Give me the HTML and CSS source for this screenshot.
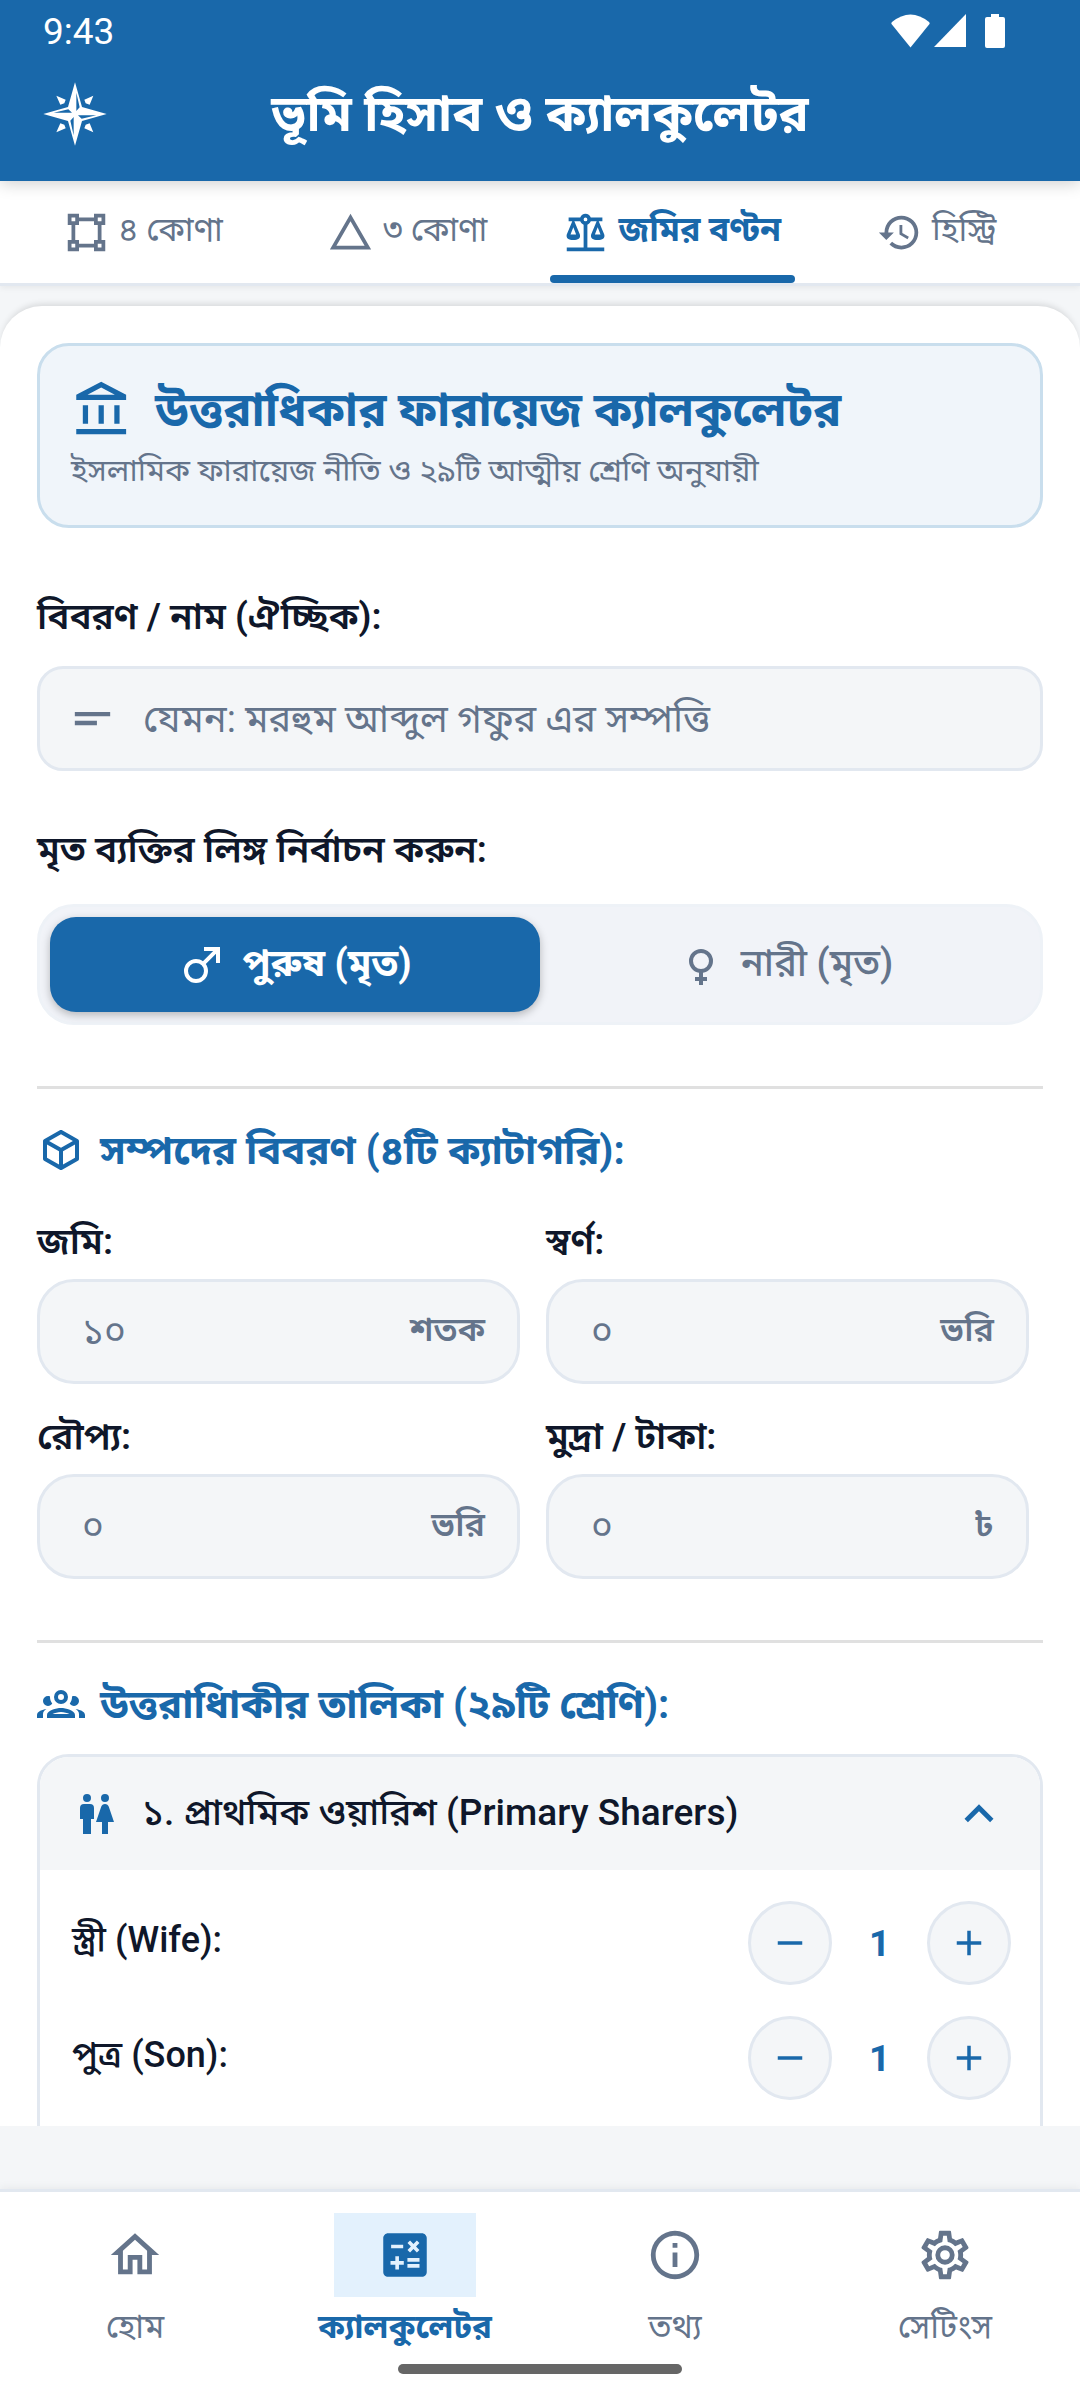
FILE: index.html
```html
<!DOCTYPE html>
<html lang="bn">
<head>
<meta charset="utf-8">
<meta name="viewport" content="width=device-width, initial-scale=1">
<title>ভূমি হিসাব ও ক্যালকুলেটর</title>
<link rel="stylesheet" href="styles.css">
</head>
<body>
<div class="app">
  <header class="app-header">
    <div class="status">
      <span class="clock">9:43</span>
      <span class="status-icons">
        <svg class="st-wifi" viewBox="0 0 39 34"><path d="M19.500 33.500 0.500 10Q0 9 1 8Q19.500 -7 38 8Q39 9 38.500 10Z"/></svg>
        <svg class="st-cell" viewBox="0 0 32 34"><path d="M32 0V33H0Z"/></svg>
        <svg class="st-batt" viewBox="0 0 20 34"><path d="M6 0h8v3h4q2 0 2 2v27q0 2-2 2H2q-2 0-2-2V5q0-2 2-2h4z"/></svg>
      </span>
    </div>
    <div class="title-row">
      <svg class="logo" viewBox="-96 -96 192 192" aria-hidden="true">
        <path d="M0 -95 21 -21 95 0 21 21 0 95 -21 21 -95 0 -21 -21ZM4 -64V-9L14 -20ZM64 4H9L20 14ZM-4 64V9L-14 20ZM-64 -4H-9L-20 -14Z"/>
        <path d="M-56 -55 -28 -43 -32 -32 -44 -28ZM55 -55 28 -43 32 -32 44 -28ZM-56 55 -28 43 -32 32 -44 28ZM55 55 28 43 32 32 44 28Z"/>
      </svg>
      <h1 class="app-title">ভূমি হিসাব ও ক্যালকুলেটর</h1>
    </div>
  </header>

  <nav class="tabs">
    <button class="tab" type="button">
      <svg class="i45" viewBox="0 0 24 24"><path d="M2,2H8V4H16V2H22V8H20V16H22V22H16V20H8V22H2V16H4V8H2V2M16,8V6H8V8H6V16H8V18H16V16H18V8H16M4,4V6H6V4H4M18,4V6H20V4H18M4,18V20H6V18H4M18,18V20H20V18H18Z"/></svg>
      <span>৪ কোণা</span>
    </button>
    <button class="tab" type="button">
      <svg class="i45" viewBox="0 0 24 24"><path d="M12,2L1,21H23M12,6L19.530,19H4.470"/></svg>
      <span>৩ কোণা</span>
    </button>
    <button class="tab tab-on" type="button">
      <svg class="i45" viewBox="0 0 24 24"><path d="M12,2C10.730,2 9.600,2.800 9.180,4H3V6H4.950L2,13C1.530,15 3,16 5.500,16C8,16 9.560,15 9,13L6.050,6H9.170C9.500,6.850 10.150,7.500 11,7.830V20H2V22H22V20H13V7.820C13.850,7.500 14.500,6.850 14.820,6H17.950L15,13C14.530,15 16,16 18.500,16C21,16 22.560,15 22,13L19.050,6H21V4H14.830C14.400,2.800 13.270,2 12,2M12,4A1,1 0 0,1 13,5A1,1 0 0,1 12,6A1,1 0 0,1 11,5A1,1 0 0,1 12,4M5.500,9.250L7,13H4L5.500,9.250M18.500,9.250L20,13H17L18.500,9.250Z"/></svg>
      <span>জমির বণ্টন</span>
    </button>
    <button class="tab" type="button">
      <svg class="i45" viewBox="0 0 24 24"><path d="M13.500,8H12V13L16.280,15.540L17,14.330L13.500,12.250V8M13,3A9,9 0 0,0 4,12H1L4.960,16.030L9,12H6A7,7 0 0,1 13,5A7,7 0 0,1 20,12A7,7 0 0,1 13,19C11.070,19 9.320,18.210 8.060,16.940L6.640,18.360C8.270,20 10.500,21 13,21A9,9 0 0,0 22,12A9,9 0 0,0 13,3"/></svg>
      <span>হিস্ট্রি</span>
    </button>
  </nav>

  <main class="sheet">
    <section class="hero">
      <h2 class="hero-title">
        <svg class="i63" viewBox="0 0 24 24"><path d="M6.500,10H4.500V17H6.500V10M12.500,10H10.500V17H12.500V10M21,19H2V21H21V19M18.500,10H16.500V17H18.500V10M11.500,3.260L16.710,6H6.290L11.500,3.260M11.500,1L2,6V8H21V6L11.500,1Z"/></svg>
        <span class="drop">উত্তরাধিকার ফারায়েজ ক্যালকুলেটর</span>
      </h2>
      <p class="hero-sub">ইসলামিক ফারায়েজ নীতি ও ২৯টি আত্মীয় শ্রেণি অনুযায়ী</p>
    </section>

    <label class="label label-desc" for="desc">বিবরণ / নাম (ঐচ্ছিক):</label>
    <div class="field field-wide">
      <svg class="i53" viewBox="0 0 24 24"><path d="M4,9H20V11H4V9M4,13H14V15H4V13Z"/></svg>
      <input class="input" id="desc" type="text" placeholder="যেমন: মরহুম আব্দুল গফুর এর সম্পত্তি">
    </div>

    <p class="label label-gender">মৃত ব্যক্তির লিঙ্গ নির্বাচন করুন:</p>
    <div class="segment">
      <button class="seg seg-on" type="button">
        <svg class="i48" viewBox="0 0 24 24"><path d="M9,9C10.290,9 11.500,9.410 12.470,10.110L17.580,5H13V3H21V11H19V6.410L13.890,11.500C14.590,12.500 15,13.700 15,15A6,6 0 0,1 9,21A6,6 0 0,1 3,15A6,6 0 0,1 9,9M9,11A4,4 0 0,0 5,15A4,4 0 0,0 9,19A4,4 0 0,0 13,15A4,4 0 0,0 9,11Z"/></svg>
        <span>পুরুষ (মৃত)</span>
      </button>
      <button class="seg" type="button">
        <svg class="i48" viewBox="0 0 24 24"><path d="M12,4A6,6 0 0,1 18,10C18,12.970 15.840,15.440 13,15.920V18H15V20H13V22H11V20H9V18H11V15.920C8.160,15.440 6,12.970 6,10A6,6 0 0,1 12,4M12,6A4,4 0 0,0 8,10A4,4 0 0,0 12,14A4,4 0 0,0 16,10A4,4 0 0,0 12,6Z"/></svg>
        <span>নারী (মৃত)</span>
      </button>
    </div>

    <section class="block">
      <h3 class="block-title">
        <svg class="i48" viewBox="0 0 24 24"><path d="M21,16.500C21,16.880 20.790,17.210 20.470,17.380L12.570,21.820C12.410,21.940 12.210,22 12,22C11.790,22 11.590,21.940 11.430,21.820L3.530,17.380C3.210,17.210 3,16.880 3,16.500V7.500C3,7.120 3.210,6.790 3.530,6.620L11.430,2.180C11.590,2.060 11.790,2 12,2C12.210,2 12.410,2.060 12.570,2.180L20.470,6.620C20.790,6.790 21,7.120 21,7.500V16.500M12,4.150L6.040,7.500L12,10.850L17.960,7.500L12,4.150M5,15.910L11,19.290V12.580L5,9.210V15.910M19,15.910V9.210L13,12.580V19.290L19,15.910Z"/></svg>
        <span class="drop">সম্পদের বিবরণ (৪টি ক্যাটাগরি):</span>
      </h3>
      <div class="assets">
        <div class="asset"><label class="label" for="land">জমি:</label><div class="field"><input class="input" id="land" type="text" placeholder="১০"><span class="unit">শতক</span></div></div>
        <div class="asset"><label class="label" for="gold">স্বর্ণ:</label><div class="field"><input class="input" id="gold" type="text" placeholder="০"><span class="unit">ভরি</span></div></div>
        <div class="asset"><label class="label" for="silver">রৌপ্য:</label><div class="field"><input class="input" id="silver" type="text" placeholder="০"><span class="unit">ভরি</span></div></div>
        <div class="asset"><label class="label" for="cash">মুদ্রা / টাকা:</label><div class="field"><input class="input" id="cash" type="text" placeholder="০"><span class="unit">৳</span></div></div>
      </div>
    </section>

    <section class="block">
      <h3 class="block-title">
        <svg class="i48" viewBox="0 0 24 24"><path d="M12,5A3.500,3.500 0 0,0 8.500,8.500A3.500,3.500 0 0,0 12,12A3.500,3.500 0 0,0 15.500,8.500A3.500,3.500 0 0,0 12,5M12,7A1.500,1.500 0 0,1 13.500,8.500A1.500,1.500 0 0,1 12,10A1.500,1.500 0 0,1 10.500,8.500A1.500,1.500 0 0,1 12,7M5.500,8A2.500,2.500 0 0,0 3,10.500C3,11.440 3.530,12.250 4.290,12.680C4.650,12.880 5.060,13 5.500,13C5.940,13 6.350,12.880 6.710,12.680C7.080,12.470 7.390,12.170 7.620,11.810C6.890,10.860 6.500,9.700 6.500,8.500C6.500,8.410 6.500,8.310 6.500,8.220C6.200,8.080 5.860,8 5.500,8M18.500,8C18.140,8 17.800,8.080 17.500,8.220C17.500,8.310 17.500,8.410 17.500,8.500C17.500,9.700 17.110,10.860 16.380,11.810C16.500,12 16.630,12.150 16.780,12.300C16.940,12.450 17.100,12.580 17.290,12.680C17.650,12.880 18.060,13 18.500,13C18.940,13 19.350,12.880 19.710,12.680C20.470,12.250 21,11.440 21,10.500A2.500,2.500 0 0,0 18.500,8M12,14C9.660,14 5,15.170 5,17.500V19H19V17.500C19,15.170 14.340,14 12,14M4.710,14.550C2.780,14.780 0,15.760 0,17.500V19H3V17.070C3,16.060 3.690,15.220 4.710,14.550M19.290,14.550C20.310,15.220 21,16.060 21,17.070V19H24V17.500C24,15.760 21.220,14.780 19.290,14.550M12,16C13.530,16 15.240,16.500 16.230,17H7.770C8.760,16.500 10.470,16 12,16Z"/></svg>
        <span class="drop">উত্তরাধিাকীর তালিকা (২৯টি শ্রেণি):</span>
      </h3>
      <div class="accordion">
        <button class="acc-head" type="button" aria-expanded="true">
          <svg class="i48" viewBox="0 0 24 24"><path d="M7.500,2A2,2 0 0,1 9.500,4A2,2 0 0,1 7.500,6A2,2 0 0,1 5.500,4A2,2 0 0,1 7.500,2M6,7H9A2,2 0 0,1 11,9V14.500H9.500V22H5.500V14.500H4V9A2,2 0 0,1 6,7M16.500,2A2,2 0 0,1 18.500,4A2,2 0 0,1 16.500,6A2,2 0 0,1 14.500,4A2,2 0 0,1 16.500,2M15,22V16H12L14.590,8.410C14.840,7.590 15.600,7 16.500,7C17.400,7 18.160,7.590 18.410,8.410L21,16H18V22H15Z"/></svg>
          <span class="acc-name">১. প্রাথমিক ওয়ারিশ (Primary Sharers)</span>
          <svg class="i58" viewBox="0 0 24 24"><path d="M7.410,15.410L12,10.830L16.590,15.410L18,14L12,8L6,14L7.410,15.410Z"/></svg>
        </button>
        <div class="heir">
          <span class="heir-name">স্ত্রী (Wife):</span>
          <button class="step" type="button" aria-label="কমান"><svg class="i42" viewBox="0 0 24 24"><path d="M19,13H5V11H19V13Z"/></svg></button>
          <output class="count">1</output>
          <button class="step" type="button" aria-label="বাড়ান"><svg class="i42" viewBox="0 0 24 24"><path d="M19,13H13V19H11V13H5V11H11V5H13V11H19V13Z"/></svg></button>
        </div>
        <div class="heir">
          <span class="heir-name">পুত্র (Son):</span>
          <button class="step" type="button" aria-label="কমান"><svg class="i42" viewBox="0 0 24 24"><path d="M19,13H5V11H19V13Z"/></svg></button>
          <output class="count">1</output>
          <button class="step" type="button" aria-label="বাড়ান"><svg class="i42" viewBox="0 0 24 24"><path d="M19,13H13V19H11V13H5V11H11V5H13V11H19V13Z"/></svg></button>
        </div>
      </div>
    </section>
  </main>

  <nav class="bottom">
    <a class="nav-item" href="#home">
      <span class="nav-icon"><svg class="i58" viewBox="0 0 24 24"><path d="M12 5.690L17 10.190V18H15V12H9V18H7V10.190L12 5.690M12 3L2 12H5V20H11V14H13V20H19V12H22"/></svg></span>
      <span>হোম</span>
    </a>
    <a class="nav-item nav-on" href="#calculator">
      <span class="nav-icon"><svg class="i58" viewBox="0 0 24 24"><path d="M19,3H5C3.900,3 3,3.900 3,5V19C3,20.100 3.900,21 5,21H19C20.100,21 21,20.100 21,19V5C21,3.900 20.100,3 19,3M13.030,7.060L14.090,6L15.500,7.410L16.910,6L17.970,7.060L16.560,8.470L17.970,9.880L16.910,10.940L15.500,9.540L14.090,10.950L13.030,9.890L14.440,8.480L13.030,7.060M6.250,7.720H11.250V9.220H6.250V7.720M11.500,16H9.500V18H8V16H6V14.500H8V12.500H9.500V14.500H11.500V16M18,17.250H13V15.750H18V17.250M18,14.750H13V13.250H18V14.750Z"/></svg></span>
      <span>ক্যালকুলেটর</span>
    </a>
    <a class="nav-item" href="#info">
      <span class="nav-icon"><svg class="i58" viewBox="0 0 24 24"><path d="M11,9H13V7H11M12,20C7.590,20 4,16.410 4,12C4,7.590 7.590,4 12,4C16.410,4 20,7.590 20,12C20,16.410 16.410,20 12,20M12,2A10,10 0 0,0 2,12A10,10 0 0,0 12,22A10,10 0 0,0 22,12A10,10 0 0,0 12,2M11,17H13V11H11V17Z"/></svg></span>
      <span>তথ্য</span>
    </a>
    <a class="nav-item" href="#settings">
      <span class="nav-icon"><svg class="i58" viewBox="0 0 24 24"><path d="M12,8A4,4 0 0,1 16,12A4,4 0 0,1 12,16A4,4 0 0,1 8,12A4,4 0 0,1 12,8M12,10A2,2 0 0,0 10,12A2,2 0 0,0 12,14A2,2 0 0,0 14,12A2,2 0 0,0 12,10M10,22C9.750,22 9.540,21.820 9.500,21.580L9.130,18.930C8.500,18.680 7.960,18.340 7.440,17.940L4.950,18.950C4.730,19.030 4.460,18.950 4.340,18.730L2.340,15.270C2.210,15.050 2.270,14.780 2.460,14.630L4.570,12.970L4.500,12L4.570,11L2.460,9.370C2.270,9.220 2.210,8.950 2.340,8.730L4.340,5.270C4.460,5.050 4.730,4.960 4.950,5.050L7.440,6.050C7.960,5.660 8.500,5.320 9.130,5.070L9.500,2.420C9.540,2.180 9.750,2 10,2H14C14.250,2 14.460,2.180 14.500,2.420L14.870,5.070C15.500,5.320 16.040,5.660 16.560,6.050L19.050,5.050C19.270,4.960 19.540,5.050 19.660,5.270L21.660,8.730C21.790,8.950 21.730,9.220 21.540,9.370L19.430,11L19.500,12L19.430,13L21.540,14.630C21.730,14.780 21.790,15.050 21.660,15.270L19.660,18.730C19.540,18.950 19.270,19.040 19.050,18.950L16.560,17.950C16.040,18.340 15.500,18.680 14.870,18.930L14.500,21.580C14.460,21.820 14.250,22 14,22H10M11.250,4L10.880,6.610C9.680,6.860 8.620,7.500 7.850,8.390L5.440,7.350L4.690,8.650L6.800,10.200C6.400,11.370 6.400,12.640 6.800,13.800L4.680,15.360L5.430,16.660L7.860,15.620C8.630,16.500 9.680,17.140 10.870,17.380L11.240,20H12.760L13.130,17.390C14.320,17.140 15.370,16.500 16.140,15.620L18.570,16.660L19.320,15.360L17.200,13.810C17.600,12.640 17.600,11.370 17.200,10.200L19.310,8.650L18.560,7.350L16.150,8.390C15.380,7.500 14.320,6.860 13.120,6.620L12.750,4H11.250Z"/></svg></span>
      <span>সেটিংস</span>
    </a>
    <span class="gesture"></span>
  </nav>
</div>
</body>
</html>
```
FILE: styles.css
```css
:root {
  --blue: #1968aa;
  --slate: #64748b;
  --ink: #0f172a;
  --line: #e2e8f0;
  --soft: #f4f6f8;
}

* { box-sizing: border-box; }

body {
  margin: 0;
  background: #f4f6f8;
  color: var(--ink);
  font-family: Roboto, "Noto Sans Bengali", "Noto Sans", sans-serif;
}

h1, h2, h3, p { margin: 0; }
svg { display: block; flex: none; fill: currentColor; fill-rule: evenodd; }
button, input { font: inherit; color: inherit; }
button { margin: 0; padding: 0; border: 0; background: none; cursor: pointer; }

.i42 { width: 42px; height: 42px; }
.i45 { width: 45px; height: 45px; }
.i48 { width: 48px; height: 48px; }
.i53 { width: 53px; height: 53px; }
.i58 { width: 58px; height: 58px; }
.i63 { width: 63px; height: 63px; }

.app { display: flex; flex-direction: column; height: 100vh; overflow: hidden; }

/* Header */
.app-header {
  position: relative;
  z-index: 1;
  flex: none;
  background: var(--blue);
  color: #fff;
  box-shadow: 0 2px 16px rgba(0, 0, 0, 0.2);
}
.status {
  display: flex;
  align-items: center;
  justify-content: space-between;
  height: 62px;
  padding: 0 75px 0 43px;
  font-size: 37px;
}
.status-icons { display: flex; align-items: center; }
.st-wifi { width: 39px; height: 34px; margin-right: 4px; }
.st-cell { width: 32px; height: 34px; margin-right: 19px; }
.st-batt { width: 20px; height: 34px; }
.title-row {
  display: grid;
  grid-template-columns: 64px 1fr 64px;
  align-items: center;
  height: 119px;
  padding: 0 43px 15px;
}
.logo { width: 64px; height: 64px; }
.app-title { font-size: 50px; line-height: 64px; font-weight: 700; text-align: center; }

/* Tabs */
.tabs {
  display: grid;
  grid-template-columns: repeat(4, 1fr);
  flex: none;
  height: 105px;
  padding: 0 11px;
  background: #fff;
  border-bottom: 3px solid var(--line);
  box-shadow: 0 2px 6px rgba(0, 0, 0, 0.06);
}
.tab {
  position: relative;
  display: flex;
  align-items: center;
  justify-content: center;
  gap: 10px;
  margin: 0 10px;
  color: var(--slate);
  font-size: 33px;
  white-space: nowrap;
}
.tab-on { color: var(--blue); font-weight: 700; font-size: 34px; }
.tab-on::after {
  content: "";
  position: absolute;
  inset: auto 0 0;
  height: 8px;
  border-radius: 4px;
  background: var(--blue);
}

/* Content sheet */
.sheet {
  flex: 1;
  min-height: 0;
  overflow: hidden;
  margin: 20px 0 63px;
  padding: 37px 37px 0;
  background: #fff;
  border-radius: 42px 42px 0 0;
  box-shadow: 0 -4px 6px -2px rgba(0, 0, 0, 0.12);
}
.drop { padding-top: 6px; }
.hero {
  height: 185px;
  padding: 32px 31px;
  background: #f0f5fa;
  border: 3px solid #c9deed;
  border-radius: 32px;
}
.hero-title {
  display: flex;
  align-items: center;
  gap: 21px;
  height: 64px;
  color: var(--blue);
  font-size: 47px;
}
.hero-sub { margin-top: 4px; color: var(--slate); font-size: 31px; line-height: 50px; }

.label { display: block; font-size: 37px; line-height: 50px; font-weight: 600; }
.label-desc { margin: 64px 0 24px; }
.label-gender { margin: 54px 0 29px; }

.field {
  display: flex;
  align-items: center;
  height: 105px;
  padding: 0 32px;
  background: var(--soft);
  border: 3px solid var(--line);
  border-radius: 37px;
  color: var(--slate);
}
.field-wide { border-radius: 26px; gap: 24px; padding: 0 26px; }
.input {
  flex: 1;
  min-width: 0;
  padding: 0;
  border: 0;
  outline: 0;
  background: none;
  font-size: 37px;
}
.field-wide .input { font-size: 38px; }
.input::placeholder { color: var(--slate); opacity: 1; }
.unit { font-size: 34px; font-weight: 600; }

.segment {
  display: grid;
  grid-template-columns: 1fr 1fr;
  height: 121px;
  padding: 10px;
  background: #f1f3f8;
  border: 3px solid #eef2f7;
  border-radius: 37px;
}
.seg {
  display: flex;
  align-items: center;
  justify-content: center;
  gap: 16px;
  border-radius: 26px;
  color: var(--slate);
  font-size: 38px;
  font-weight: 500;
}
.seg span { padding-top: 3px; }
.seg-on {
  background: var(--blue);
  color: #fff;
  font-weight: 700;
  box-shadow: 0 3px 8px rgba(0, 0, 0, 0.25);
}

.block { margin-top: 61px; padding-top: 33px; border-top: 3px solid #e0e0e0; }
.block-title {
  display: flex;
  align-items: center;
  gap: 15px;
  height: 56px;
  color: var(--blue);
  font-size: 40px;
}
.assets {
  display: grid;
  grid-template-columns: repeat(2, minmax(0, 1fr));
  gap: 28px 26px;
  margin-top: 39px;
  padding-right: 14px;
}
.asset .label { margin-bottom: 12px; }
.asset .field { padding-left: 42px; }

.accordion {
  margin-top: 22px;
  overflow: hidden;
  border: 3px solid var(--line);
  border-radius: 32px 32px 0 0;
  padding-bottom: 32px;
}
.acc-head {
  display: flex;
  align-items: center;
  width: 100%;
  height: 113px;
  padding: 0 32px;
  gap: 22px;
  background: var(--soft);
  color: var(--blue);
  text-align: left;
}
.acc-name { flex: 1; padding-top: 3px; color: var(--ink); font-size: 37px; font-weight: 500; }
.heir {
  display: flex;
  align-items: center;
  height: 84px;
  margin: 31px 29px 0 32px;
}
.heir-name { flex: 1; font-size: 36px; font-weight: 500; }
.step {
  display: grid;
  place-items: center;
  width: 84px;
  height: 84px;
  border: 3px solid var(--line);
  border-radius: 50%;
  background: var(--soft);
  color: var(--blue);
}
.count { width: 95px; text-align: center; color: var(--blue); font-size: 37px; font-weight: 700; }

/* Bottom navigation */
.bottom {
  position: relative;
  display: grid;
  grid-template-columns: repeat(4, 1fr);
  flex: none;
  height: 211px;
  padding-top: 21px;
  background: #fff;
  border-top: 3px solid var(--line);
  box-shadow: 0 -2px 8px rgba(0, 0, 0, 0.05);
}
.nav-item {
  display: flex;
  flex-direction: column;
  align-items: center;
  gap: 8px;
  color: var(--slate);
  font-size: 33px;
  line-height: 44px;
  text-decoration: none;
}
.nav-icon { display: grid; place-items: center; width: 142px; height: 84px; }
.nav-on { color: var(--blue); font-weight: 700; }
.nav-on .nav-icon { background: #e3f1fd; }
.gesture {
  position: absolute;
  left: 50%;
  bottom: 26px;
  width: 284px;
  height: 10px;
  margin-left: -142px;
  border-radius: 5px;
  background: #666;
}
```
